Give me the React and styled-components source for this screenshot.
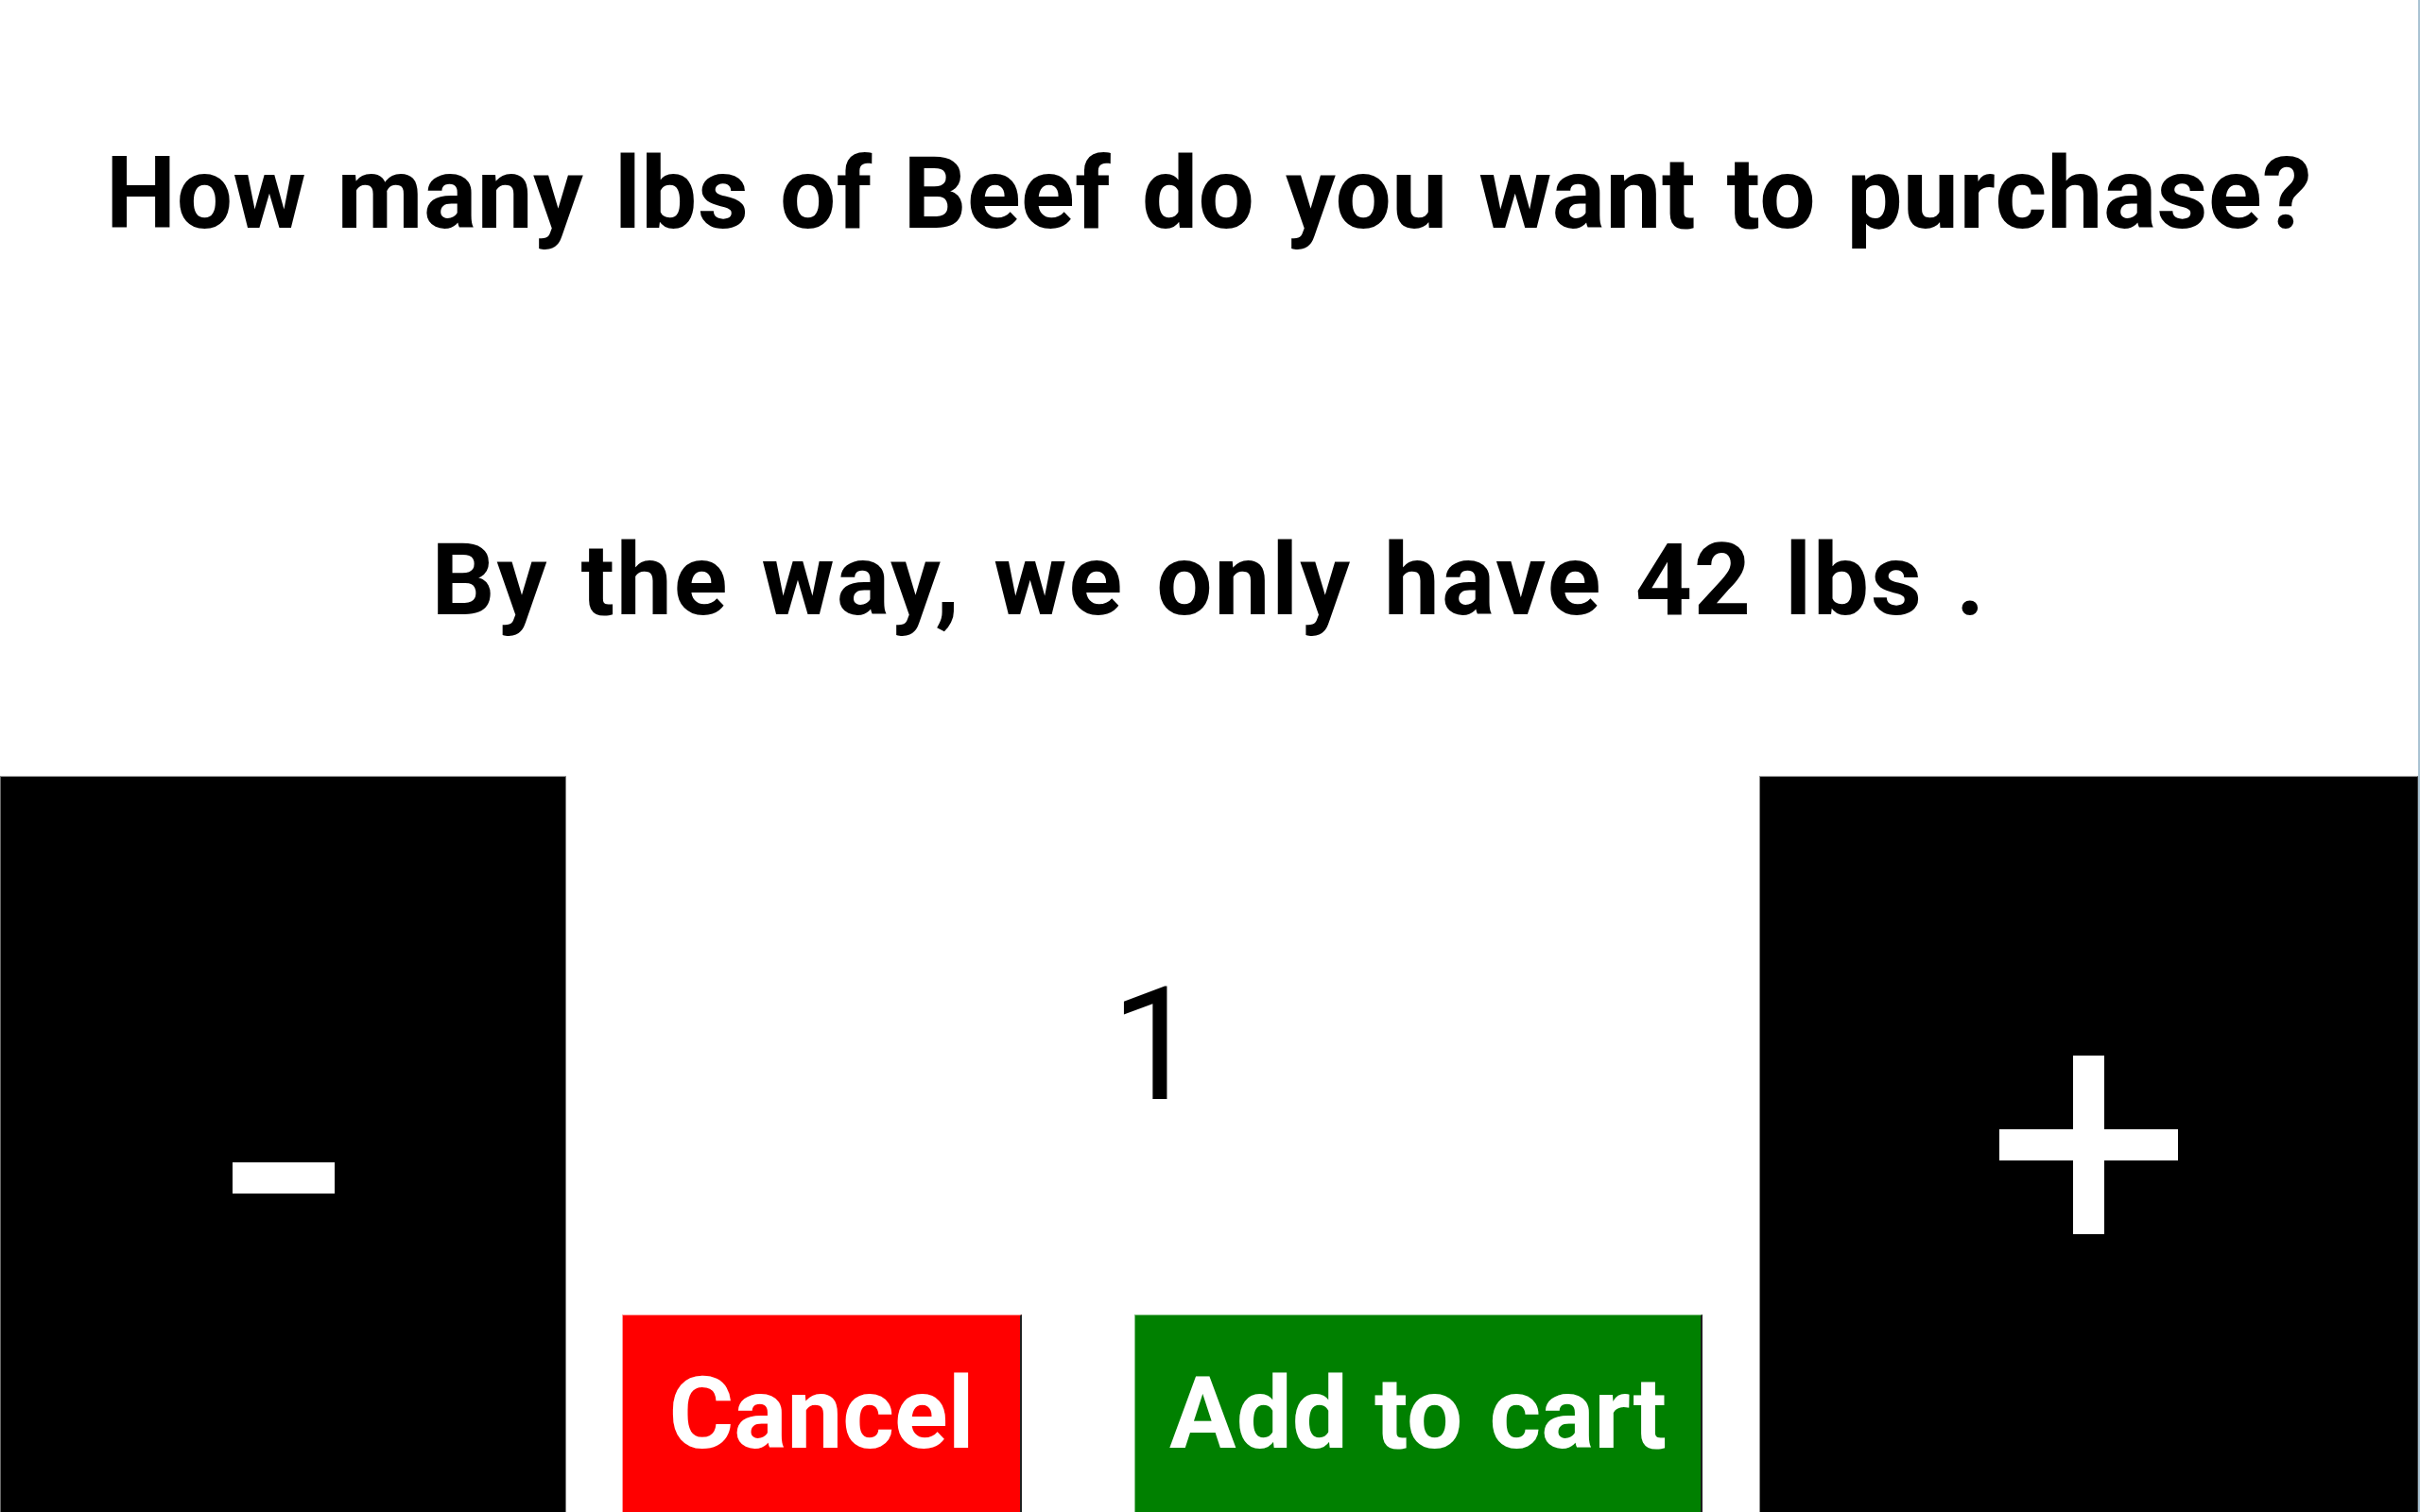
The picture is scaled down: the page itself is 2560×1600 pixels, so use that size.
import React, { useState } from 'react'
import styled, { createGlobalStyle } from 'styled-components'

const GlobalStyle = createGlobalStyle`
  html, body {
    margin: 0;
    padding: 0;
    background: #ffffff;
  }
  * {
    box-sizing: border-box;
  }
`

const STOCK = 42;
const ITEM = 'Beef';

export default function App() {
  const [amount, setAmount] = useState(1);

  function decrease() {
    if (amount > 1) setAmount(amount - 1);
  }
  function increase() {
    if (amount < STOCK) setAmount(amount + 1);
  }

  return (
    <>
      <GlobalStyle />
      <Page>
        <Question>
          <Line spacing={0.5}>How many lbs of {ITEM} do you want to purchase?</Line>
          <Line spacing={2}>By the way, we only have {STOCK} lbs .</Line>
        </Question>
        <Controls>
          <StepButton aria-label="decrease" onClick={decrease} offset={70}>
            <Bar length={108} />
          </StepButton>
          <Middle>
            <Count>{amount}</Count>
            <Actions>
              <Action color="#ff0000" light="#ff9a9a" width={423}>Cancel</Action>
              <Action color="#008000" light="#80c080" width={601}>Add to cart</Action>
            </Actions>
          </Middle>
          <StepButton aria-label="increase" onClick={increase} offset={0} edge>
            <Cross>
              <Bar length={189} />
              <Bar length={189} vertical />
            </Cross>
          </StepButton>
        </Controls>
      </Page>
    </>
  )
}

const Page = styled.div`
  width: 2560px;
  height: 1600px;
  overflow: hidden;
  display: flex;
  flex-direction: column;
  background: #ffffff;
  border-right: 2px solid #a9c3d3;
`

const Question = styled.div`
  height: 821px;
  padding-top: 153px;
  display: flex;
  flex-direction: column;
  align-items: center;
  gap: 304px;
`

const Line = styled.p`
  margin: 0;
  font-family: Roboto, "Noto Sans", sans-serif;
  font-weight: 700;
  font-size: 105px;
  line-height: 1;
  letter-spacing: ${props => props.spacing}px;
  word-spacing: 6px;
  color: #000000;
  white-space: nowrap;
`

const Controls = styled.div`
  flex: 1;
  display: grid;
  grid-template-columns: 599px minmax(0, 1fr) 697px;
`

const StepButton = styled.button`
  all: unset;
  box-sizing: border-box;
  display: flex;
  justify-content: center;
  align-items: center;
  padding-top: ${props => props.offset}px;
  background: #000000;
  border-top: 1px solid #a0a0a0;
  border-left: 1px solid ${props => props.edge ? '#8a8a8a' : '#6a6a6a'};
  border-right: 1px solid ${props => props.edge ? '#3a3a3a' : '#7a7a7a'};
  cursor: pointer;
`

const Cross = styled.div`
  position: relative;
  width: 189px;
  height: 189px;
  display: flex;
  justify-content: center;
  align-items: center;
`

const Bar = styled.span`
  display: block;
  background: #ffffff;
  width: ${props => props.vertical ? 33 : props.length}px;
  height: ${props => props.vertical ? props.length : 33}px;
  ${props => props.vertical && `
    position: absolute;
    left: 78px;
    top: 0;
  `}
`

const Middle = styled.div`
  display: flex;
  flex-direction: column;
  align-items: center;
  justify-content: space-between;
`

const Count = styled.div`
  margin-top: 202px;
  margin-right: 16px;
  font-family: Roboto, "Noto Sans", sans-serif;
  font-size: 167px;
  line-height: 1;
  color: #000000;
`

const Actions = styled.div`
  align-self: stretch;
  display: flex;
  justify-content: center;
  gap: 119px;
  padding: 0 60px 0 59px;
`

const Action = styled.button`
  all: unset;
  box-sizing: border-box;
  flex: none;
  width: ${props => props.width}px;
  height: 209px;
  display: flex;
  justify-content: center;
  align-items: center;
  background: ${props => props.color};
  border-top: 1px solid ${props => props.light};
  border-left: 1px solid ${props => props.light};
  border-right: 2px solid #202020;
  font-family: Roboto, "Noto Sans", sans-serif;
  font-weight: 700;
  font-size: 105px;
  line-height: 1;
  letter-spacing: 0;
  word-spacing: 2px;
  white-space: nowrap;
  color: #ffffff;
  cursor: pointer;
`
